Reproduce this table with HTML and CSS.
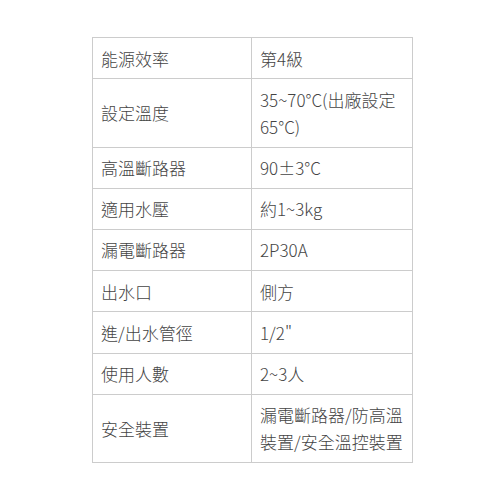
FILE: index.html
```html
<!DOCTYPE html>
<html lang="zh-Hant">
<head>
<meta charset="utf-8">
<link rel="stylesheet" href="styles.css">
</head>
<body>
<table class="spec">
  <colgroup>
    <col class="key-col">
    <col class="val-col">
  </colgroup>
  <tbody>
    <tr><td class="key">能源效率</td><td class="val">第4級</td></tr>
    <tr><td class="key">設定溫度</td><td class="val">35~70°C(出廠設定65°C)</td></tr>
    <tr><td class="key">高溫斷路器</td><td class="val">90±3°C</td></tr>
    <tr><td class="key">適用水壓</td><td class="val">約1~3kg</td></tr>
    <tr><td class="key">漏電斷路器</td><td class="val">2P30A</td></tr>
    <tr><td class="key">出水口</td><td class="val">側方</td></tr>
    <tr><td class="key">進/出水管徑</td><td class="val">1/2"</td></tr>
    <tr><td class="key">使用人數</td><td class="val">2~3人</td></tr>
    <tr><td class="key">安全裝置</td><td class="val">漏電斷路器/防高溫裝置/安全溫控裝置</td></tr>
  </tbody>
</table>
</body>
</html>
```

FILE: styles.css
```css
html, body {
  margin: 0;
  padding: 0;
  background: #fff;
}
body {
  padding: 37px 0 0 92px;
  font-family: "Noto Sans CJK TC", "Noto Sans", sans-serif;
  font-size: 17px;
  font-weight: 300;
  line-height: 1.6;
  color: #444;
}
.spec {
  border-collapse: collapse;
  width: 320px;
  table-layout: fixed;
}
.key-col {
  width: 159px;
}
.val-col {
  width: 161px;
}
.spec td {
  box-sizing: border-box;
  border: 1px solid #ccc;
  padding: 6.5px 8px;
  vertical-align: middle;
  text-align: left;
}
```
